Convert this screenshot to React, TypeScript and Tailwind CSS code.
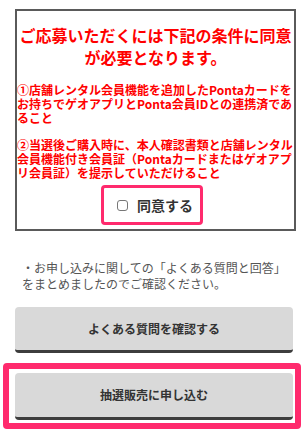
const App = () => {
  return (
    <div className="w-[308px] h-[440px] bg-white pt-[9px] font-['Noto_Sans_CJK_JP',sans-serif]">
      <div className="ml-[15px] w-[281px] border-2 border-[#5a5a5a] pt-[13px] pb-[4px]">
        <p className="text-center text-[16px] leading-[22px] font-bold text-[#ff0000] whitespace-nowrap">
          ご応募いただくには下記の条件に同意
          <br />
          が必要となります。
        </p>

        <p className="mt-[15px] text-[12px] leading-[14px] font-bold text-[#ff0000] whitespace-nowrap">
          ①店舗レンタル会員機能を追加したPontaカードを
          <br />
          お持ちでゲオアプリとPonta会員IDとの連携済であ
          <br />
          ること
        </p>

        <p className="mt-[13px] text-[12px] leading-[14px] font-bold text-[#ff0000] whitespace-nowrap">
          ②当選後ご購入時に、本人確認書類と店舗レンタル
          <br />
          会員機能付き会員証（Pontaカードまたはゲオアプ
          <br />
          リ会員証）を提示していただけること
        </p>

        <div className="mt-[5px] ml-[84px] w-[102px] h-[40px] flex items-center gap-[9px] pl-[13px] border-[3px] border-[#ff2a6d] rounded-[4px] bg-white">
          <span className="w-[11px] h-[11px] border border-[#777] rounded-[3px] bg-white"></span>
          <span className="text-[14px] font-bold text-[#333] leading-none">同意する</span>
        </div>
      </div>

      <p className="mt-[29px] pl-[22px] text-[12px] leading-[16px] text-[#555] whitespace-nowrap">
        ・お申し込みに関しての「よくある質問と回答」
        <br />
        をまとめましたのでご確認ください。
      </p>

      <div className="mt-[15px] ml-[15px] w-[278px] h-[46px] flex items-center justify-center bg-[#d9d9d9] rounded-[4px] border-b-[3px] border-[#3d3d3d] text-[12px] font-bold text-[#333]">
        よくある質問を確認する
      </div>

      <div className="mt-[10px] ml-[3px] w-[298px] border-[6px] border-[#ff2a6d] rounded-[4px] pt-[4px] pb-[3px] pl-[6px] pr-[2px]">
        <div className="h-[47px] flex items-center justify-center bg-[#d9d9d9] rounded-[4px] border-b-[3px] border-[#3d3d3d] text-[12px] font-bold text-[#333]">
          抽選販売に申し込む
        </div>
      </div>
    </div>
  );
};

export default App;
